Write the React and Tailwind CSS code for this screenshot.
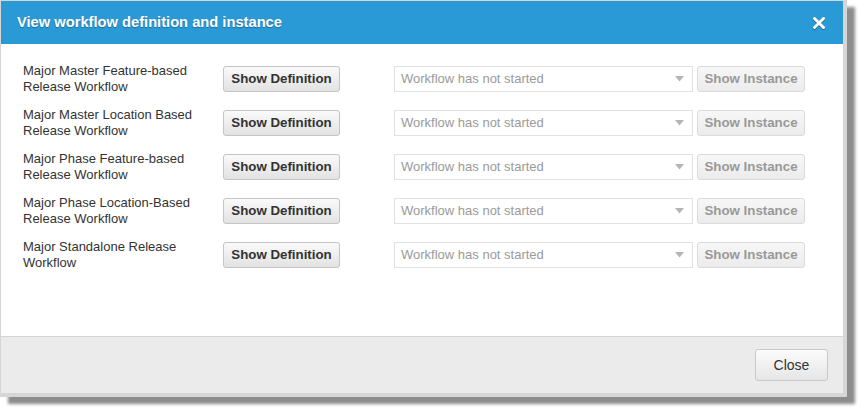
const ROWS = [
  ["Major Master Feature-based", "Release Workflow"],
  ["Major Master Location Based", "Release Workflow"],
  ["Major Phase Feature-based", "Release Workflow"],
  ["Major Phase Location-Based", "Release Workflow"],
  ["Major Standalone Release", "Workflow"],
];

const FONT = { fontFamily: '"Liberation Sans", Arial, sans-serif' };

function CloseX() {
  return (
    <svg width="12" height="12" viewBox="0 0 12 12" className="drop-shadow-[0_1px_0_rgba(0,0,0,0.35)]">
      <path d="M1.5 1.5 L10.5 10.5 M10.5 1.5 L1.5 10.5" stroke="#fff" strokeWidth="2.8" strokeLinecap="square" />
    </svg>
  );
}

function WorkflowRow({ lines }) {
  return (
    <div className="flex h-[44px] items-center">
      <div className="w-[200px] text-[13px] leading-[16px] text-[#333]">
        <div>{lines[0]}</div>
        <div>{lines[1]}</div>
      </div>
      <button className="h-[26px] w-[117px] rounded-[3px] border border-[#c4c4c4] bg-gradient-to-b from-[#fafafa] to-[#e2e2e2] text-[13.3px] font-bold text-[#333]">
        Show Definition
      </button>
      <div className="ml-[54px] flex h-[26px] w-[299px] items-center justify-between border border-[#e2e2e2] bg-white pl-[6px] pr-[8px] text-[13px] text-[#9a9a9a]">
        <span>Workflow has not started</span>
        <svg width="9" height="6" viewBox="0 0 9 6">
          <path d="M0 0 H9 L4.5 5.5 Z" fill="#b5b5b5" />
        </svg>
      </div>
      <button className="ml-[4px] h-[26px] w-[108px] rounded-[3px] border border-[#dadada] bg-gradient-to-b from-[#f7f7f7] to-[#ebebeb] text-[13.3px] font-bold text-[#999]">
        Show Instance
      </button>
    </div>
  );
}

export default function App() {
  return (
    <div className="h-[412px] w-[863px] bg-white" style={FONT}>
      <div className="flex h-[397px] w-[847px] flex-col border-b-[4px] border-l border-r-[4px] border-t border-[#d6d6d6] bg-white shadow-[8px_7px_3px_rgba(0,0,0,0.45)]">
        <div className="flex h-[43px] shrink-0 items-center justify-between bg-[#2a9ad6] pl-[16px] pr-[18px]">
          <span className="text-[14.7px] font-bold text-white [text-shadow:0_1px_1px_rgba(0,0,0,0.3)]">
            View workflow definition and instance
          </span>
          <CloseX />
        </div>
        <div className="flex-1 pl-[22px] pt-[13px]">
          {ROWS.map((r) => (
            <WorkflowRow key={r[0]} lines={r} />
          ))}
        </div>
        <div className="flex h-[57px] shrink-0 items-center justify-end border-t border-[#d4d4d4] bg-[#ebebeb] pr-[15px]">
          <button className="h-[32px] w-[73px] rounded-[3px] border border-[#c8c8c8] bg-gradient-to-b from-[#fbfbfb] to-[#e6e6e6] text-[14px] text-[#333]">
            Close
          </button>
        </div>
      </div>
    </div>
  );
}
